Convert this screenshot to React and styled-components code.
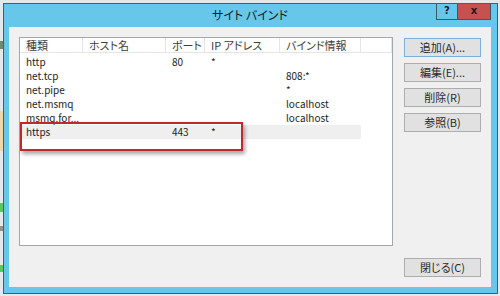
import styled, { createGlobalStyle } from "styled-components";

const GlobalStyle = createGlobalStyle`
  html, body {
    margin: 0;
    padding: 0;
  }
  body {
    width: 500px;
    height: 296px;
    overflow: hidden;
    background: #e6e7e8;
    font-family: "Noto Sans CJK JP", "Noto Sans", sans-serif;
    font-feature-settings: "palt";
    color: #1e1e1e;
  }
`;

const columns = [
    { key: "type", label: "種類", width: 63 },
    { key: "host", label: "ホスト名", width: 83 },
    { key: "port", label: "ポート", width: 39 },
    { key: "ip", label: "IP アドレス", width: 75 },
    { key: "info", label: "バインド情報", width: 81 },
];

const bindings = [
    { type: "http", host: "", port: "80", ip: "*", info: "" },
    { type: "net.tcp", host: "", port: "", ip: "", info: "808:*" },
    { type: "net.pipe", host: "", port: "", ip: "", info: "*" },
    { type: "net.msmq", host: "", port: "", ip: "", info: "localhost" },
    { type: "msmq.for...", host: "", port: "", ip: "", info: "localhost" },
    { type: "https", host: "", port: "443", ip: "*", info: "", selected: true },
];

const sideButtons = [
    { label: "追加(A)...", primary: true },
    { label: "編集(E)..." },
    { label: "削除(R)" },
    { label: "参照(B)" },
];

const desktopMarks = [
    { top: 38, height: 8, color: "#6f8a6a" },
    { top: 62, height: 40, color: "#f1d7a8" },
    { top: 52, height: 9, color: "#58c95a" },
    { top: 14, height: 5, color: "#9a8e86" },
    { top: 34, height: 7, color: "#58c95a" },
];

const colTemplate = columns.map(c => `${c.width}px`).join(" ");

export default function App() {
    return (
        <>
            <GlobalStyle />
            <Screen>
                <DesktopStrip>
                    {desktopMarks.map((m, i) => (
                        <Mark key={i} $top={m.top} $height={m.height} $color={m.color} />
                    ))}
                </DesktopStrip>
                <Window>
                    <TitleBar>
                        <span />
                        <Title>サイト バインド</Title>
                        <TitleButtons>
                            <TitleButton>?</TitleButton>
                            <TitleButton $close>x</TitleButton>
                        </TitleButtons>
                    </TitleBar>
                    <Client>
                        <ListView>
                            <ListHeader>
                                {columns.map(c => (
                                    <HeaderCell key={c.key}>{c.label}</HeaderCell>
                                ))}
                                <HeaderCell />
                            </ListHeader>
                            <ListBody>
                                {bindings.map((b, i) => (
                                    <Row key={i} $selected={b.selected}>
                                        {columns.map(c => (
                                            <Cell key={c.key}>{b[c.key]}</Cell>
                                        ))}
                                    </Row>
                                ))}
                            </ListBody>
                            <Highlight />
                        </ListView>
                        <SideButtons>
                            {sideButtons.map(b => (
                                <Button key={b.label} $primary={b.primary}>{b.label}</Button>
                            ))}
                        </SideButtons>
                        <Footer>
                            <Button>閉じる(C)</Button>
                        </Footer>
                    </Client>
                </Window>
            </Screen>
        </>
    );
}

const Screen = styled.div`
    display: flex;
    padding-top: 3px;
`;

const DesktopStrip = styled.div`
    width: 3px;
    display: flex;
    flex-direction: column;
`;

const Mark = styled.div`
    margin-top: ${p => p.$top}px;
    height: ${p => p.$height}px;
    background: ${p => p.$color};
`;

const Window = styled.div`
    width: 495px;
    height: 291px;
    box-sizing: border-box;
    border: 1px solid #4f5b63;
    background: #66c7ea;
    padding: 0 6px 6px 5px;
    display: flex;
    flex-direction: column;
`;

const TitleBar = styled.div`
    height: 23px;
    display: grid;
    grid-template-columns: 1fr auto 1fr;
    align-items: start;
`;

const Title = styled.div`
    font-size: 12px;
    line-height: 22px;
    color: #1a1a1a;
    white-space: nowrap;
`;

const TitleButtons = styled.div`
    justify-self: end;
    display: flex;
`;

const TitleButton = styled.div`
    width: ${p => (p.$close ? 33 : 22)}px;
    height: 16px;
    box-sizing: border-box;
    border: 1px solid #3d5866;
    border-top: none;
    border-left-width: ${p => (p.$close ? 0 : 1)}px;
    background: ${p => (p.$close ? "#c75050" : "#66c7ea")};
    font-family: "DejaVu Sans", sans-serif;
    font-weight: bold;
    font-size: 10px;
    line-height: 14px;
    text-align: center;
    color: #1b1b1b;
`;

const Client = styled.div`
    height: 260px;
    box-sizing: border-box;
    background: #f0f0f0;
    padding: 10px;
    display: grid;
    grid-template-columns: 374px 77px;
    grid-template-rows: 209px 19px;
    column-gap: 11px;
    row-gap: 12px;
`;

const ListView = styled.div`
    position: relative;
    box-sizing: border-box;
    border: 1px solid #a4a7ab;
    background: #ffffff;
`;

const ListHeader = styled.div`
    display: grid;
    grid-template-columns: ${colTemplate} 1fr;
    height: 15px;
    box-sizing: border-box;
    border-bottom: 1px solid #e5e5e5;
`;

const HeaderCell = styled.div`
    border-right: 1px solid #e5e5e5;
    padding-left: 6px;
    font-size: 11px;
    line-height: 14px;
    color: #3c3c3c;
    white-space: nowrap;
    overflow: hidden;
`;

const ListBody = styled.div`
    padding-top: 2px;
`;

const Row = styled.div`
    display: grid;
    grid-template-columns: ${colTemplate};
    width: 341px;
    height: 14px;
    background: ${p => (p.$selected ? "#efefef" : "transparent")};
`;

const Cell = styled.div`
    padding-left: 6px;
    font-size: 10px;
    line-height: 14px;
    color: #1e1e1e;
    white-space: nowrap;
    overflow: hidden;
`;

const Highlight = styled.div`
    position: absolute;
    left: 0;
    top: 84px;
    width: 223px;
    height: 29px;
    box-sizing: border-box;
    border: 2px solid #c1272d;
    box-shadow: 2px 3px 4px rgba(0, 0, 0, 0.35);
`;

const SideButtons = styled.div`
    display: flex;
    flex-direction: column;
    gap: 6px;
    padding-top: 1px;
`;

const Footer = styled.div`
    grid-column: 2;
    display: flex;
`;

const Button = styled.div`
    width: 77px;
    height: 19px;
    box-sizing: border-box;
    border: 1px solid ${p => (p.$primary ? "#7eaedc" : "#adadad")};
    background: #e1e1e1;
    font-size: 11px;
    line-height: 17px;
    text-align: center;
    color: #2a2a2a;
    white-space: nowrap;
`;
